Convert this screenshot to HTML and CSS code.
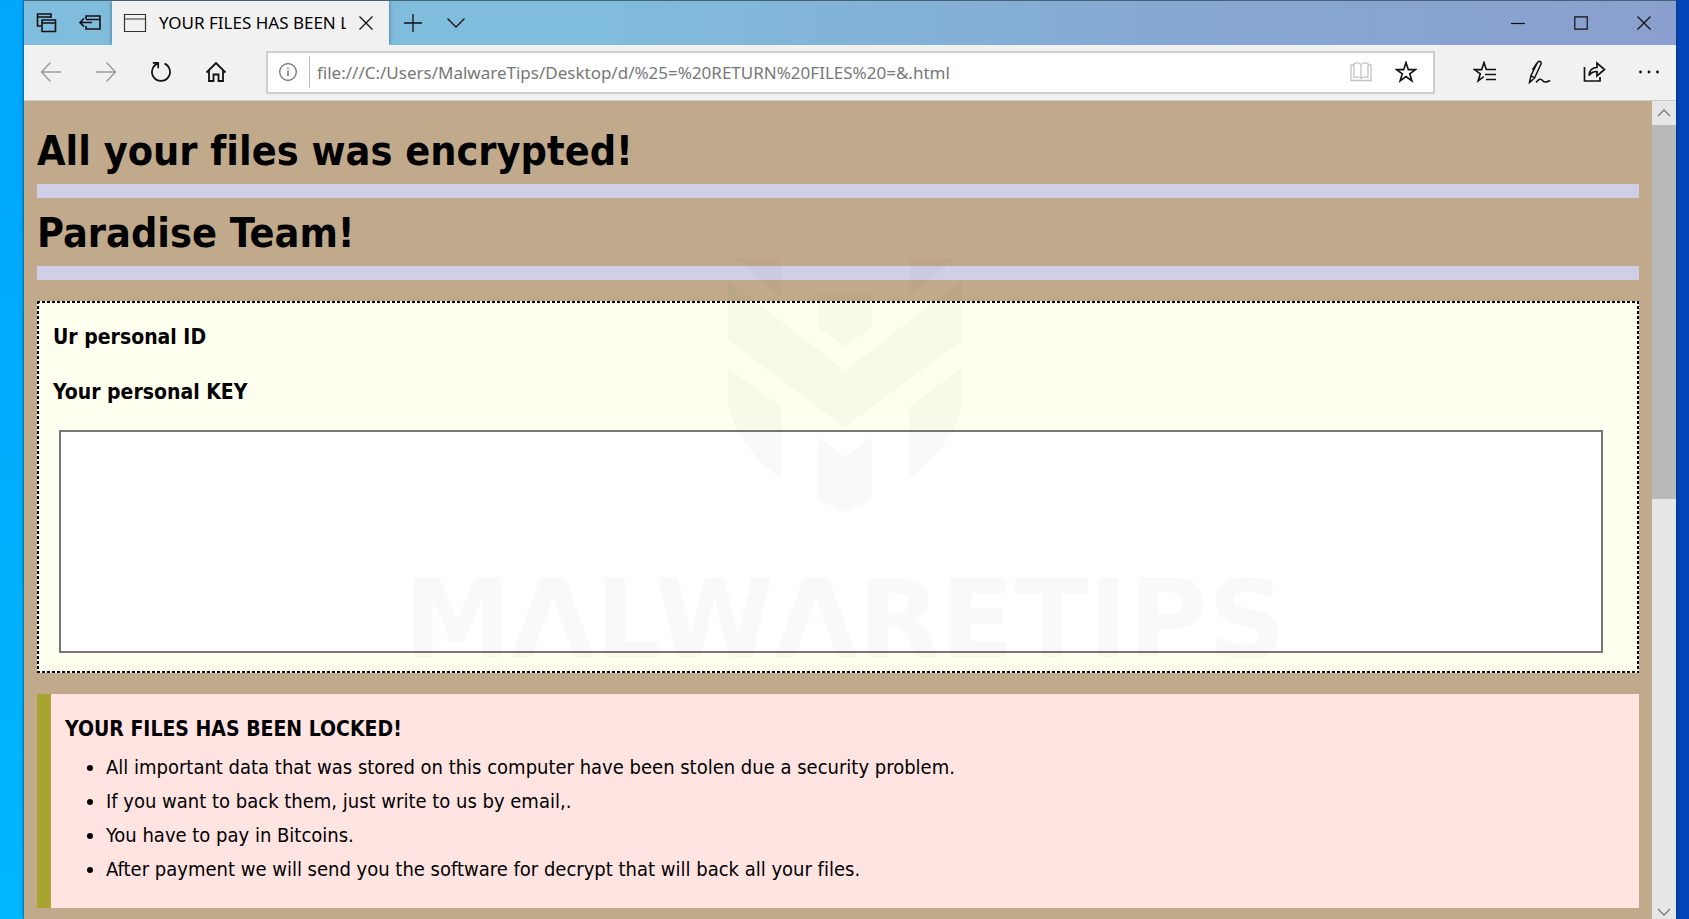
FILE: index.html
```html
<!DOCTYPE html>
<html lang="en">
<head>
<meta charset="utf-8">
<title>YOUR FILES HAS BEEN LOCKED!</title>
<link rel="stylesheet" href="styles.css">
</head>
<body>
<div class="window">
  <header class="tabbar">
    <div class="tab-actions">
      <button class="icon-btn" aria-label="Tabs you've set aside"><svg width="22" height="22" viewBox="0 0 22 22"><path d="M5 14H1.500V2H15v4M1.500 5H15M6 8h13.500v11.500H6zM6 11h13.500" stroke-width="1.600"/></svg></button>
      <button class="icon-btn" aria-label="Set these tabs aside"><svg width="24" height="22" viewBox="0 0 24 22"><path d="M8 7V4h14v13H8v-3M8 7.500h14M2 10.500h12M6 6.500l-4 4 4 4" stroke-width="1.600"/></svg></button>
    </div>
    <div class="tab">
      <svg width="24" height="20" viewBox="0 0 24 20" class="page-icon"><path d="M1.500 1.500h21v17h-21zM1.500 6h21" stroke-width="1.200"/></svg>
      <span class="tab-title">YOUR FILES HAS BEEN LOCKED!</span>
      <button class="icon-btn" aria-label="Close tab"><svg width="16" height="16" viewBox="0 0 16 16"><path d="M1.500 1.500l13 13M14.500 1.500l-13 13" stroke-width="1.300"/></svg></button>
    </div>
    <div class="tab-tools">
      <button class="icon-btn" aria-label="New tab"><svg width="20" height="20" viewBox="0 0 20 20"><path d="M10 1v18M1 10h18" stroke-width="1.300"/></svg></button>
      <button class="icon-btn" aria-label="Show tab previews"><svg width="20" height="12" viewBox="0 0 20 12"><path d="M1.500 1.500L10 10l8.500-8.500" stroke-width="1.300"/></svg></button>
    </div>
    <div class="window-controls">
      <button class="icon-btn" aria-label="Minimize"><svg width="14" height="14" viewBox="0 0 14 14"><path d="M0 7.500h14" stroke-width="1.200"/></svg></button>
      <button class="icon-btn" aria-label="Maximize"><svg width="14" height="14" viewBox="0 0 14 14"><path d="M.8.800h12.400v12.400H.8z" stroke-width="1.200"/></svg></button>
      <button class="icon-btn" aria-label="Close"><svg width="14" height="14" viewBox="0 0 14 14"><path d="M.5.500l13 13M13.500.500l-13 13" stroke-width="1.300"/></svg></button>
    </div>
  </header>

  <nav class="toolbar">
    <div class="nav-buttons">
      <button class="icon-btn faded" aria-label="Back"><svg width="22" height="22" viewBox="0 0 22 22"><path d="M21 11H1.500M10.500 1.500L1.500 11l9 9.500" stroke-width="1.400"/></svg></button>
      <button class="icon-btn faded" aria-label="Forward"><svg width="22" height="22" viewBox="0 0 22 22"><path d="M1 11h19.500M11.500 1.500l9 9.500-9 9.500" stroke-width="1.400"/></svg></button>
      <button class="icon-btn" aria-label="Refresh"><svg width="22" height="22" viewBox="0 0 22 22"><path d="M14.500 2.600A9 9 0 1 1 7.500 2.600M2.800 1.800h5.400V7.200" stroke-width="1.700"/></svg></button>
      <button class="icon-btn" aria-label="Home"><svg width="22" height="22" viewBox="0 0 22 22"><path d="M1.500 11.500L11 2l9.500 9.500M4 9.500V20h4.500v-6.500h5V20H18V9.500" stroke-width="1.800"/></svg></button>
    </div>
    <div class="address">
      <svg width="20" height="20" viewBox="0 0 20 20" class="info"><circle cx="10" cy="10" r="8.300" stroke-width="1.200"/><path d="M10 8.500V14M10 5.500v1.500" stroke-width="1.400"/></svg>
      <input class="url" type="text" aria-label="Address" value="file:///C:/Users/MalwareTips/Desktop/d/%25=%20RETURN%20FILES%20=&amp;.html">
      <button class="icon-btn pale" aria-label="Reading view"><svg width="22" height="22" viewBox="0 0 22 22"><path d="M11 3.500v14M11 3.500C9 1.800 6 1.800 4 2.500v14c2-.7 5-.7 7 1 2-1.700 5-1.700 7-1v-14c-2-.7-5-.7-7 1M4 4H1v15.500h20V4h-3" stroke-width="1.300"/></svg></button>
      <button class="icon-btn" aria-label="Add to favorites"><svg width="22" height="22" viewBox="0 0 22 22"><path d="M11 1.500l2.300 7.100h7.200l-5.800 4.200 2.200 7.100L11 15.600l-5.900 4.300 2.200-7.100L1.500 8.600h7.200z" stroke-width="1.600"/></svg></button>
    </div>
    <div class="tool-buttons">
      <button class="icon-btn" aria-label="Hub"><svg width="24" height="22" viewBox="0 0 24 22"><path d="M15 8.500h-1.700L11 1.500 8.700 8.600H1.500l5.800 4.200-2.200 7.100 5.700-4.200M13 8.500h10M12 13.500h11M13 18.500h10" stroke-width="1.600"/></svg></button>
      <button class="icon-btn" aria-label="Make a web note"><svg width="24" height="24" viewBox="0 0 24 24"><path d="M1.500 22.500l1.500-7L9.500 2.500c1-2 4.500-1 3.500 1.500L6.500 18zM3 15.500L6.500 18M4.500 10L9 2.800M8 22.500c3-4 5-4 6.500-2s3.500 2.500 7.500 0" stroke-width="1.500"/></svg></button>
      <button class="icon-btn" aria-label="Share"><svg width="24" height="22" viewBox="0 0 24 22"><path d="M1.500 6v14H17v-4M6 14.500C6.500 9 9.500 6.500 14 6.500V2l7.500 6.500-7.500 6.500v-4.500c-4 0-6 1-8 4z" stroke-width="1.700"/></svg></button>
      <button class="icon-btn" aria-label="More"><svg width="22" height="22" viewBox="0 0 22 22"><g class="dots"><circle cx="2.500" cy="11" r="1.400"/><circle cx="11" cy="11" r="1.400"/><circle cx="19.500" cy="11" r="1.400"/></g></svg></button>
    </div>
  </nav>

  <div class="viewport">
    <main class="page">
      <h1 class="banner">All your files was encrypted!</h1>
      <h1 class="banner">Paradise Team!</h1>
      <section class="key-box">
        <h2 class="label">Ur personal ID</h2>
        <h2 class="label"><label for="key">Your personal KEY</label></h2>
        <textarea class="key" id="key"></textarea>
      </section>
      <section class="notice">
        <h2 class="notice-title">YOUR FILES HAS BEEN LOCKED!</h2>
        <ul class="points">
          <li>All important data that was stored on this computer have been stolen due a security problem.</li>
          <li>If you want to back them, just write to us by email,.</li>
          <li>You have to pay in Bitcoins.</li>
          <li>After payment we will send you the software for decrypt that will back all your files.</li>
        </ul>
      </section>
    </main>
    <div class="scrollbar">
      <button class="icon-btn scroll-up" aria-label="Scroll up"><svg width="14" height="8" viewBox="0 0 14 8"><path d="M1 7l6-6 6 6" stroke-width="1.300"/></svg></button>
      <div class="track"><div class="thumb"></div></div>
      <button class="icon-btn scroll-down" aria-label="Scroll down"><svg width="14" height="8" viewBox="0 0 14 8"><path d="M1 1l6 6 6-6" stroke-width="1.300"/></svg></button>
    </div>
  </div>
</div>

<div class="watermark">
  <svg class="shield" width="234" height="254" viewBox="0 0 234 254"><path d="M6 0h47v39zM228 0h-47v39zM0 22L117 113 234 22V82L117 169 0 82zM90 36h54v33l-27 19-27-19zM0 110l53 39v71C20 196 0 166 0 136zM234 110l-53 39v71c33-24 53-54 53-84zM90 179l27 20 27-20v62l-27 13-27-13z"/></svg>
  <span class="brand">MΛLWΛRETIPS</span>
</div>
</body>
</html>
```

FILE: styles.css
```css
* { box-sizing: border-box; }

body {
  margin: 0;
  height: 100vh;
  padding: 0 13px 0 24px;
  overflow: hidden;
  background:
    linear-gradient(#00a6fa, #00b6ff) left / 50% 100% no-repeat,
    #0345b8;
  font-family: "DejaVu Sans Condensed", "DejaVu Sans", sans-serif;
  font-variant-ligatures: none;
  color: #000;
}

.window {
  height: 100%;
  display: flex;
  flex-direction: column;
  border-top: 1px solid #46627a;
  box-shadow: 0 0 3px #012a50;
}

.icon-btn {
  display: flex;
  align-items: center;
  justify-content: center;
  padding: 0;
  border: 0;
  background: none;
  color: #111;
}

svg { display: block; fill: none; stroke: currentColor; }
.dots { fill: currentColor; stroke: none; }

.tabbar {
  flex: none;
  display: flex;
  height: 44px;
  background: linear-gradient(90deg, #80bcdc 0, #80bcdc 35%, #86a8d2 70%, #8a9fce 100%);
}

.tab-actions {
  display: flex;
  align-items: center;
  gap: 20px;
  width: 88px;
  padding-left: 12px;
}

.tab {
  display: flex;
  align-items: center;
  gap: 12px;
  width: 277px;
  padding: 0 15px 0 11px;
  background: #f1f1f1;
  box-shadow: 0 0 4px #3d6a8a;
  clip-path: inset(0 -4px);
}

.page-icon { flex: none; color: #333; }

.tab-title {
  flex: 1;
  overflow: hidden;
  white-space: nowrap;
  font: 17px/24px "Noto Sans", sans-serif;
}

.tab-tools {
  display: flex;
  align-items: center;
  gap: 23px;
  padding-left: 14px;
}

.window-controls {
  display: flex;
  align-items: center;
  gap: 49px;
  margin-left: auto;
  padding-right: 25px;
}

.toolbar {
  flex: none;
  display: flex;
  align-items: center;
  height: 56px;
  padding: 0 16px 1px;
  background: #f1f1f1;
  border-bottom: 1px solid #cfcac4;
}

.nav-buttons { display: flex; gap: 33px; width: 226px; }
.faded { color: #9a9a9a; }
.pale { color: #c4c4c4; }

.address {
  flex: 1;
  display: flex;
  align-items: center;
  height: 43px;
  padding: 0 16px 0 10px;
  gap: 23px;
  background: #fff;
  border: 2px solid #cdcdcd;
}

.info { flex: none; margin-right: -12px; color: #666; }

.url {
  flex: 1;
  min-width: 0;
  height: 32px;
  padding: 0 0 0 7px;
  border: 0;
  border-left: 1px solid #bbb;
  background: none;
  font: 17px/24px "Noto Sans", sans-serif;
  color: #777;
}

.tool-buttons { display: flex; gap: 31px; padding-left: 38px; }

.viewport { flex: 1; min-height: 0; display: flex; }

.page {
  flex: 1;
  overflow: hidden;
  padding: 15px 13px 0;
  background: #c1aa8c;
}

.banner {
  margin: 0;
  padding-top: 2px;
  border-bottom: 14px solid #d0cfe8;
  font-size: 41px;
  line-height: 66px;
}

/* Fine dashed frame: 3px dashes with 2px gaps on all four sides */
.key-box {
  margin-top: 21px;
  padding: 15px 36px 20px 16px;
  background:
    repeating-linear-gradient(90deg, #000 0 3px, #ffffef 3px 5px) top / 100% 2px no-repeat,
    repeating-linear-gradient(90deg, #000 0 3px, #ffffef 3px 5px) bottom / 100% 2px no-repeat,
    repeating-linear-gradient(#000 0 3px, #ffffef 3px 5px) left / 2px 100% no-repeat,
    repeating-linear-gradient(#000 0 3px, #ffffef 3px 5px) right / 2px 100% no-repeat,
    #ffffef;
}

.label { margin: 0 0 13px; font-size: 21px; line-height: 42px; }

.key {
  display: block;
  width: calc(100% - 6px);
  height: 223px;
  margin: 17px 0 0 6px;
  border: 2px solid #777;
  background: #fff;
  resize: none;
}

.notice {
  margin-top: 21px;
  padding: 18px 14px 22px;
  border-left: 14px solid #a7a530;
  background: #ffe4e2;
}

.notice-title { margin: 0; font-size: 21px; line-height: 34px; }
.points { margin: 4px 0 0; padding-left: 41px; font-size: 20px; line-height: 34px; }

.scrollbar {
  flex: none;
  display: flex;
  flex-direction: column;
  width: 24px;
  background: #e6e6e6;
}

.scroll-up, .scroll-down { flex: none; color: #777; }
.scroll-up { height: 24px; }
.scroll-down { height: 14px; }
.track { flex: 1; }
.thumb { height: 48%; background: #b9b9b9; }

.watermark {
  position: absolute;
  inset: 258px 0 auto;
  display: flex;
  flex-direction: column;
  align-items: center;
  gap: 44px;
  opacity: 0.02;
  pointer-events: none;
}

.shield { fill: #000; stroke: none; }
.brand { font: 700 108px/128px "DejaVu Sans", sans-serif; }
```
